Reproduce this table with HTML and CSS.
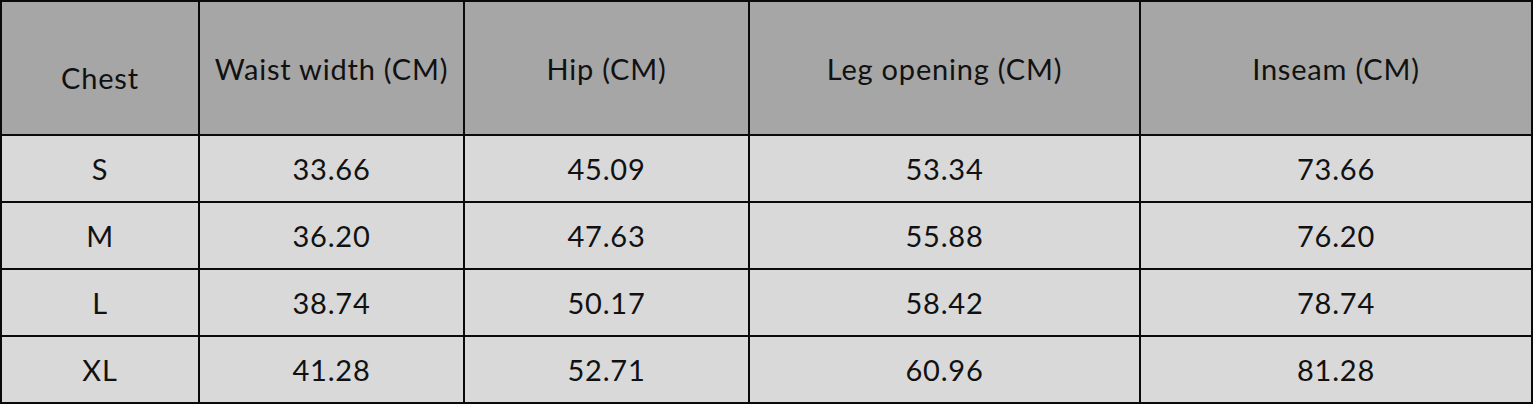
FILE: index.html
```html
<!DOCTYPE html>
<html>
<head>
<meta charset="utf-8">
<link rel="stylesheet" href="styles.css">
</head>
<body>
<div class="chart">
  <div class="cell head chest">Chest</div>
  <div class="cell head">Waist width (CM)</div>
  <div class="cell head">Hip (CM)</div>
  <div class="cell head">Leg opening (CM)</div>
  <div class="cell head">Inseam (CM)</div>

  <div class="cell">S</div>
  <div class="cell">33.66</div>
  <div class="cell">45.09</div>
  <div class="cell">53.34</div>
  <div class="cell">73.66</div>

  <div class="cell">M</div>
  <div class="cell">36.20</div>
  <div class="cell">47.63</div>
  <div class="cell">55.88</div>
  <div class="cell">76.20</div>

  <div class="cell">L</div>
  <div class="cell">38.74</div>
  <div class="cell">50.17</div>
  <div class="cell">58.42</div>
  <div class="cell">78.74</div>

  <div class="cell">XL</div>
  <div class="cell">41.28</div>
  <div class="cell">52.71</div>
  <div class="cell">60.96</div>
  <div class="cell">81.28</div>
</div>
</body>
</html>
```
FILE: styles.css
```css
html, body {
  margin: 0;
  padding: 0;
  background: #ffffff;
}

.chart {
  display: grid;
  width: 1533px;
  box-sizing: border-box;
  grid-template-columns: 196px 263px 283px 389px 390px;
  grid-template-rows: 132px 65px 65px 65px 65px;
  gap: 2px;
  padding: 2px;
  background: #0a0a0a;
  font-family: Lato, "Open Sans", sans-serif;
  font-size: 29px;
  letter-spacing: 0.8px;
  color: #111111;
}

.cell {
  display: flex;
  align-items: center;
  justify-content: center;
  background: #d9d9d9;
  white-space: nowrap;
}

.head {
  background: #a6a6a6;
}

.chest {
  padding-top: 18px;
}
```
